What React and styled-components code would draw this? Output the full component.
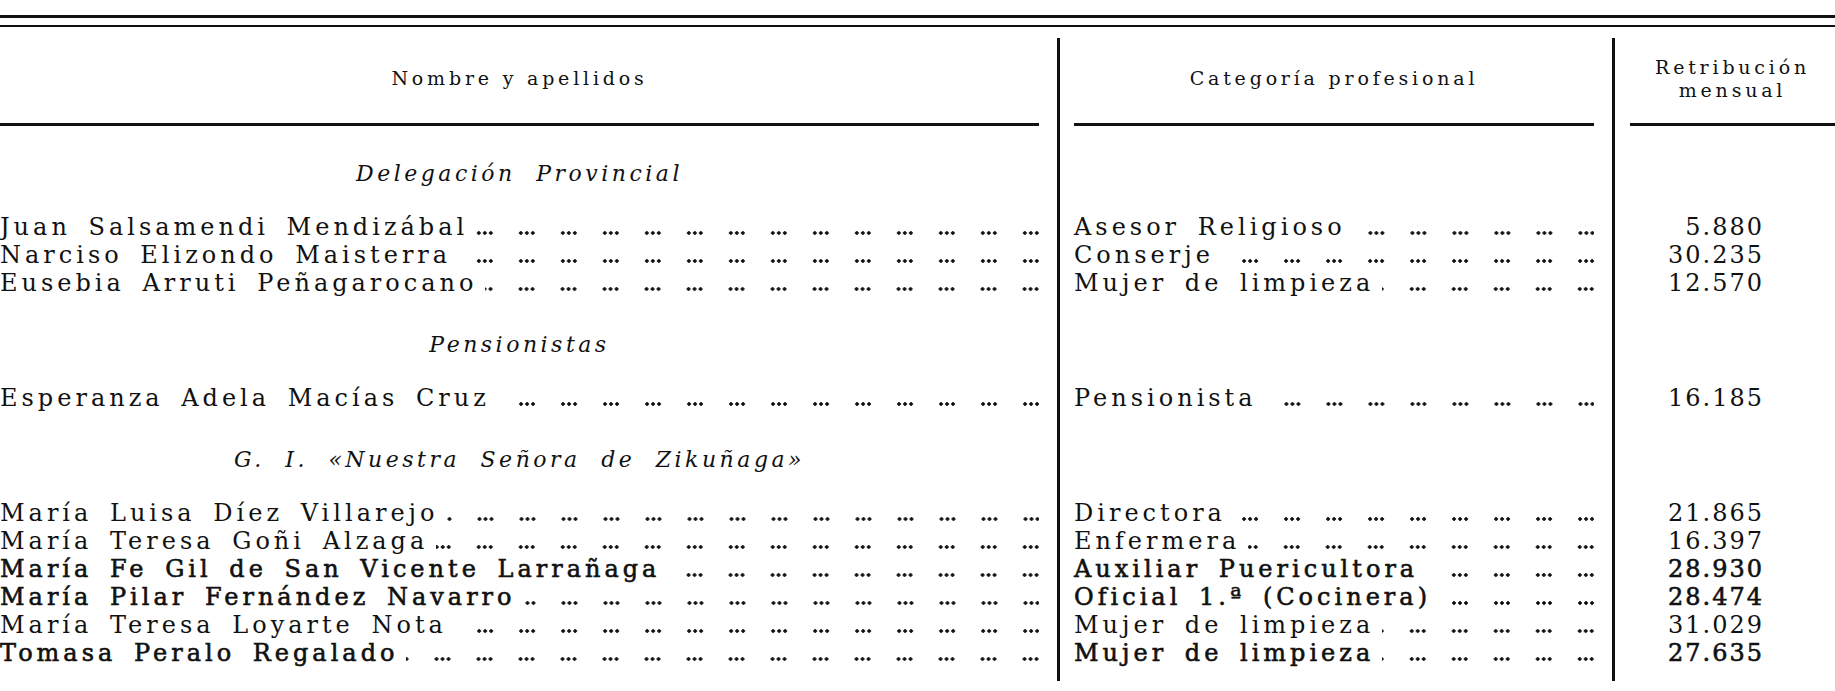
import React from 'react';
import styled, { createGlobalStyle } from 'styled-components';

const GlobalStyle = createGlobalStyle`
  html, body {
    margin: 0;
    padding: 0;
    background: #fff;
  }
  body {
    font-family: "DejaVu Serif", "Liberation Serif", serif;
    color: #111;
  }
`;

const sections = [
  {
    title: 'Delegación Provincial',
    rows: [
      ['Juan Salsamendi Mendizábal', 'Asesor Religioso', '5.880'],
      ['Narciso Elizondo Maisterra', 'Conserje', '30.235'],
      ['Eusebia Arruti Peñagarocano', 'Mujer de limpieza', '12.570'],
    ],
  },
  {
    title: 'Pensionistas',
    rows: [['Esperanza Adela Macías Cruz', 'Pensionista', '16.185']],
  },
  {
    title: 'G. I. «Nuestra Señora de Zikuñaga»',
    rows: [
      ['María Luisa Díez Villarejo', 'Directora', '21.865'],
      ['María Teresa Goñi Alzaga', 'Enfermera', '16.397'],
      ['María Fe Gil de San Vicente Larrañaga', 'Auxiliar Puericultora', '28.930', true],
      ['María Pilar Fernández Navarro', 'Oficial 1.ª (Cocinera)', '28.474', true],
      ['María Teresa Loyarte Nota', 'Mujer de limpieza', '31.029'],
      ['Tomasa Peralo Regalado', 'Mujer de limpieza', '27.635', true],
    ],
  },
];

function App() {
  return (
    <Page>
      <GlobalStyle />
      <Rule $thick={3} $gap={7} />
      <Rule $thick={2} $gap={11} />
      <Table>
        <HeaderCell $right={18}>
          <HeaderLabel>Nombre y apellidos</HeaderLabel>
        </HeaderCell>
        <HeaderCell $divider $left={14} $right={18}>
          <HeaderLabel>Categoría profesional</HeaderLabel>
        </HeaderCell>
        <HeaderCell $divider $left={15}>
          <HeaderLabel>
            Retribución
            <br />
            mensual
          </HeaderLabel>
        </HeaderCell>

        {sections.map((s) => (
          <React.Fragment key={s.title}>
            <TitleCell>{s.title}</TitleCell>
            <Blank $divider />
            <Blank $divider />
            {s.rows.map(([name, cat, amount, heavy], i) => (
              <React.Fragment key={name + i}>
                <NameCell $heavy={heavy}>
                  <Label>{name}</Label>
                  <Leader />
                </NameCell>
                <CategoryCell $heavy={heavy}>
                  <Label>{cat}</Label>
                  <Leader />
                </CategoryCell>
                <AmountCell $heavy={heavy}>{amount}</AmountCell>
              </React.Fragment>
            ))}
          </React.Fragment>
        ))}

        <Spacer />
        <Spacer $divider />
        <Spacer $divider />
      </Table>
    </Page>
  );
}

const Page = styled.div`
  width: 1835px;
  height: 691px;
  overflow: hidden;
  padding-top: 15px;
  box-sizing: border-box;
`;

const Rule = styled.div`
  height: ${(p) => p.$thick}px;
  margin-bottom: ${(p) => p.$gap}px;
  background: #111;
`;

const Table = styled.div`
  display: grid;
  grid-template-columns: 1057px 555px 1fr;
`;

const HeaderCell = styled.div`
  height: 88px;
  display: flex;
  box-sizing: border-box;
  border-left: ${(p) => (p.$divider ? '3px solid #111' : 'none')};
  padding-left: ${(p) => p.$left || 0}px;
  padding-right: ${(p) => p.$right || 0}px;
`;

const HeaderLabel = styled.div`
  flex: 1;
  display: flex;
  align-items: center;
  justify-content: center;
  padding-bottom: 4px;
  text-align: center;
  border-bottom: 3px solid #111;
  font-size: 19px;
  line-height: 23px;
  letter-spacing: 3.8px;
`;

const TitleCell = styled.div`
  padding: 34px 18px 25px 0;
  font-style: italic;
  font-size: 22px;
  line-height: 28px;
  letter-spacing: 3.5px;
  word-spacing: 10px;
  text-align: center;
  white-space: nowrap;
`;

const Blank = styled.div`
  border-left: ${(p) => (p.$divider ? '3px solid #111' : 'none')};
`;

const Spacer = styled(Blank)`
  height: 14px;
`;

const RowCell = styled.div`
  display: flex;
  align-items: baseline;
  height: 28px;
  font-size: 24px;
  line-height: 28px;
  letter-spacing: 4px;
  word-spacing: 6px;
  white-space: nowrap;
  -webkit-text-stroke: ${(p) => (p.$heavy ? '0.6px #111' : '0')};
`;

const NameCell = styled(RowCell)`
  padding-right: 18px;
`;

const CategoryCell = styled(RowCell)`
  border-left: 3px solid #111;
  padding: 0 18px 0 14px;
`;

const AmountCell = styled(RowCell)`
  border-left: 3px solid #111;
  justify-content: flex-end;
  padding-right: 71px;
  letter-spacing: 2px;
`;

const Label = styled.span`
  flex: none;
`;

/* dotted leader: groups of three dots every 42px, anchored to the right edge */
const Leader = styled.span`
  flex: 1;
  min-width: 0;
  height: 4px;
  margin-left: 8px;
  background-image:
    radial-gradient(circle at 28px 2px, #111 1.5px, transparent 2px),
    radial-gradient(circle at 34px 2px, #111 1.5px, transparent 2px),
    radial-gradient(circle at 40px 2px, #111 1.5px, transparent 2px);
  background-size: 42px 4px;
  background-repeat: repeat-x;
  background-position: right bottom;
`;

export default App;
